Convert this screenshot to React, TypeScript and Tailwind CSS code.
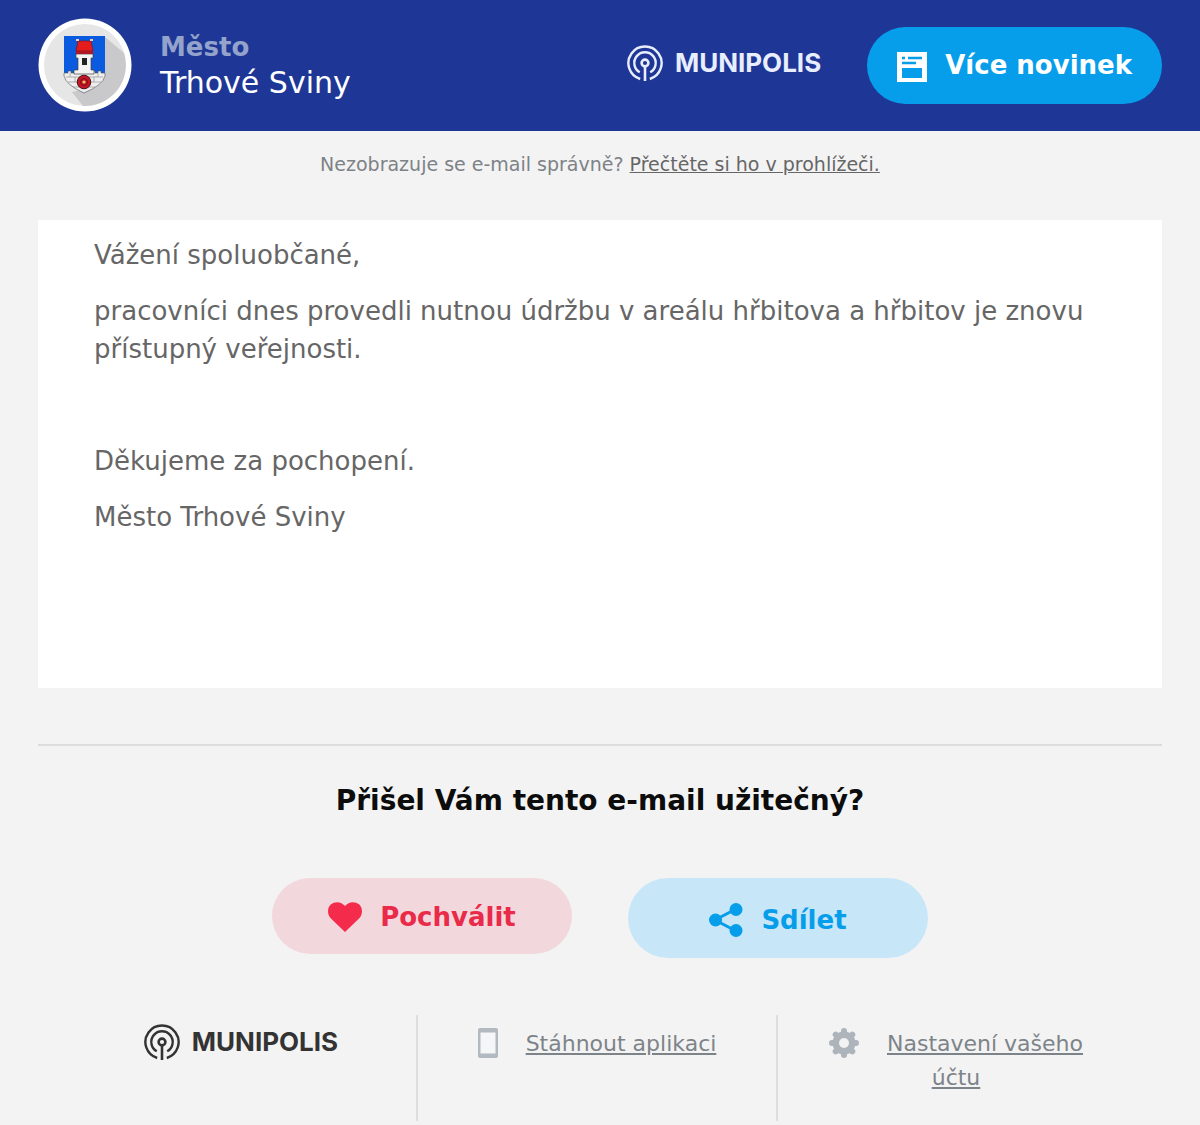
import { clsx } from 'clsx';

const paragraphs = [
  'Vážení spoluobčané,',
  'pracovníci dnes provedli nutnou údržbu v areálu hřbitova a hřbitov je znovu přístupný veřejnosti.',
  '\u00a0',
  'Děkujeme za pochopení.',
  'Město Trhové Sviny',
];

const Munipolis = ({ light = false }: { light?: boolean }) => (
  <a href="#munipolis" className={clsx('flex shrink-0 items-center gap-3', light ? 'text-[#e9eeff]' : 'text-[#333333]')}>
    <svg viewBox="0 0 36 36" className="h-9 w-9" fill="none" stroke="currentColor" strokeWidth="2.4" aria-hidden="true">
      <path d="M13.2 34A16.6 16.6 0 1 1 22.8 34" />
      <path d="M12.8 27.3A10.7 10.7 0 1 1 23.2 27.3" />
      <circle cx="18" cy="18" r="3.4" strokeWidth="2.6" />
      <path d="M18 21V36" strokeWidth="2.6" />
    </svg>
    <span className="font-[Inter,sans-serif] text-[26px] leading-9 font-bold">MUNIPOLIS</span>
  </a>
);

const CityCrest = () => (
  <svg viewBox="0 0 94 94" className="h-[94px] w-[94px] shrink-0" role="img" aria-label="Znak města Trhové Sviny">
    <circle cx="47" cy="47" r="46.5" fill="#fff" />
    <circle cx="47" cy="47" r="41" fill="#e6e6e6" />
    <path d="M67 19L86 35A41 41 0 0 1 45 88L34 74L60 68Z" fill="#c9c9cb" />
    <path d="M26 18H67V54Q66 65 46 75Q27 65 26 54Z" fill="#0b5be0" />
    <path
      d="M26 55H30V53H33V55H36V53H40V55H53V53H57V55H60V53H63V55H67V58Q65 67 46 75Q28 67 26 58Z"
      fill="#eeeeee"
      stroke="#555"
      strokeWidth="0.6"
    />
    <path d="M28 59H65M30 64H63M35 69H57M32 55V59M37 59V64M60 55V59M56 59V64M41 64V69" stroke="#888" strokeWidth="0.6" />
    <path d="M38 36H55V40H53V52H56V56H36V52H40V40H38Z" fill="#f4f4f4" stroke="#444" strokeWidth="0.7" />
    <path d="M40 23H53L55 33H38Z" fill="#e51c1c" stroke="#7b1521" strokeWidth="0.7" />
    <path d="M38 33H55V36H38Z" fill="#b01622" />
    <path d="M38 22H41M52 22H55" stroke="#f3c9b0" strokeWidth="2" />
    <path d="M44 40H49V47H44Z" fill="#222" />
    <circle cx="46" cy="64" r="6.8" fill="#c41626" stroke="#4a1014" strokeWidth="1" />
    <circle cx="46" cy="64" r="3.5" fill="none" stroke="#7b0d18" strokeWidth="1" />
    <circle cx="46" cy="64" r="1.6" fill="#e7c65a" />
  </svg>
);

const NewsIcon = () => (
  <svg viewBox="0 0 30 30" className="mt-1 h-[30px] w-[30px]" aria-hidden="true">
    <path d="M0 0H30V30H0Z" fill="#fff" />
    <path d="M5 6H8M11 6H25M5 11H19" stroke="#069dea" strokeWidth="2.4" />
    <path d="M5 16H25V26H5Z" fill="#069dea" />
  </svg>
);

const HeartIcon = () => (
  <svg viewBox="0 0 34 30" className="h-[30px] w-[34px]" aria-hidden="true">
    <path d="M17 30L2.7 16.2C-1 12.2-.8 5.4 3 2.2C7-.9 13.5-.6 17 4C20.5-.6 27-.9 31 2.2C34.8 5.4 35 12.2 31.3 16.2Z" fill="#f42b4b" />
  </svg>
);

const ShareIcon = () => (
  <svg viewBox="0 0 34 34" className="h-[34px] w-[34px]" fill="#069dea" aria-hidden="true">
    <path d="M27 6L6 17L27 28" fill="none" stroke="#069dea" strokeWidth="3" />
    <circle cx="6.5" cy="17" r="6.5" />
    <circle cx="27" cy="6.5" r="6.5" />
    <circle cx="27" cy="27.5" r="6.5" />
  </svg>
);

const iconClass = 'mr-7 inline-block h-[30px] align-[-7px]';

const PhoneIcon = () => (
  <svg viewBox="0 0 20 30" className={clsx(iconClass, 'w-5')} aria-hidden="true">
    <rect width="20" height="30" rx="2" fill="#b3b9c0" />
    <path d="M2.5 4.5H17.5V25.5H2.5Z" fill="#f4f6f8" />
  </svg>
);

const GearIcon = () => (
  <svg viewBox="0 0 30 30" className={clsx(iconClass, 'w-[30px]')} aria-hidden="true">
    <g stroke="#adb4bb" strokeWidth="6" strokeLinecap="round">
      <path d="M15 3V27M3 15H27M6.7 6.7L23.3 23.3M23.3 6.7L6.7 23.3" />
    </g>
    <circle cx="15" cy="15" r="11.5" fill="#adb4bb" />
    <circle cx="15" cy="15" r="5" fill="#f2f2f2" />
  </svg>
);

const App = () => {
  return (
    <div className="min-h-screen bg-[#f3f3f3] font-['DejaVu_Sans',sans-serif] text-[#666666]">
      <header className="flex items-center bg-[#1e3796] px-[38px] pt-[18px] pb-[19px]">
        <CityCrest />
        <div className="ml-7 grow">
          <div className="text-[26px] leading-9 font-bold text-[#94a3cb]">Město</div>
          <h1 className="text-[30px] leading-9 text-white">Trhové Sviny</h1>
        </div>
        <div className="mb-1">
          <Munipolis light />
        </div>
        <a href="#novinky" className="ml-[46px] flex h-[77px] shrink-0 items-center gap-[18px] rounded-full bg-[#069dea] px-[30px] text-[26px] font-bold text-white">
          <NewsIcon />
          Více novinek
        </a>
      </header>

      <p className="pt-[19px] text-center text-[19px] leading-7 text-[#7d8286]">
        Nezobrazuje se e-mail správně?{' '}
        <a href="#prohlizec" className="text-[#666666] underline">Přečtěte si ho v prohlížeči.</a>
      </p>

      <main className="mx-[38px] mt-[42px] flex flex-col gap-[18px] bg-white px-14 pt-4 pb-[152px] text-[26px] leading-[38px]">
        {paragraphs.map((text, i) => (
          <p key={i}>{text}</p>
        ))}
      </main>

      <section className="mx-[38px] mt-14 border-t-2 border-[#dcdddf] pt-9 text-center">
        <h2 className="text-[28px] leading-[38px] font-bold text-[#0c0c0c]">Přišel Vám tento e-mail užitečný?</h2>
        <div className="mt-[58px] flex items-start justify-center gap-14">
          <button type="button" className="flex h-[76px] w-[300px] items-center justify-center gap-[18px] rounded-full bg-[#f2d7dd] pt-0.5 text-[26px] font-bold text-[#e92a48]">
            <HeartIcon />
            Pochválit
          </button>
          <button type="button" className="flex h-20 w-[300px] items-center justify-center gap-[18px] rounded-full bg-[#c7e7f9] pt-1 text-[26px] font-bold text-[#069dea]">
            <ShareIcon />
            Sdílet
          </button>
        </div>
      </section>

      <footer className="mt-[57px] grid grid-cols-3 pr-[62px] pl-[58px] text-center text-[22px] leading-[34px] text-[#7d8489]">
        <div className="flex h-[106px] items-start justify-center border-r-2 border-[#dcdddf] pt-[9px] pl-2">
          <Munipolis />
        </div>
        <div className="h-[106px] border-r-2 border-[#dcdddf] pt-3">
          <PhoneIcon />
          <a href="#aplikace" className="underline">Stáhnout aplikaci</a>
        </div>
        <div className="h-[106px] pt-3 pr-12 pl-11">
          <GearIcon />
          <a href="#nastaveni" className="underline">Nastavení vašeho účtu</a>
        </div>
      </footer>
    </div>
  );
};

export default App;
